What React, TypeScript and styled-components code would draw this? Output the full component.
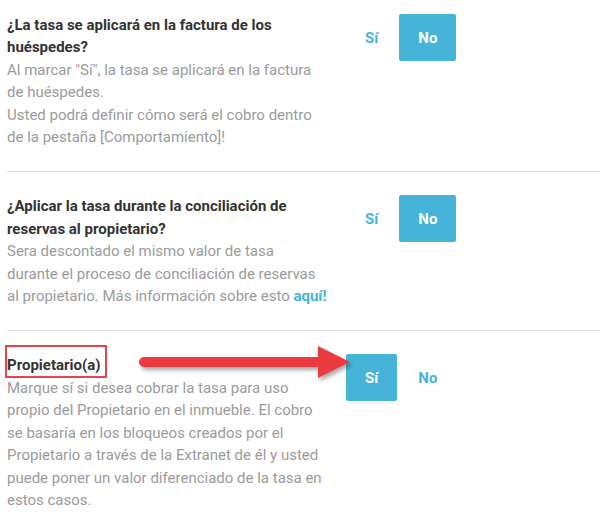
import styled, { createGlobalStyle } from 'styled-components';

const GlobalStyle = createGlobalStyle`
  body {
    margin: 0;
    background: #fff;
    font-family: Roboto, "Liberation Sans", sans-serif;
  }
`;

const BLUE = '#46b4d8';

const Page = styled.div`
  padding: 14px 0 0 7px;
`;

const Row = styled.section`
  position: relative;
  display: grid;
  grid-template-columns: 320px auto;
  column-gap: 19px;
  align-items: start;
  padding: 23px 0;
  border-top: 1px solid #dedede;

  &:first-child {
    padding-top: 0;
    border-top: none;
  }
`;

const Info = styled.div`
  font-size: 15px;
  line-height: 22.4px;
`;

const Title = styled.h3`
  margin: 0;
  font-size: 15px;
  font-weight: 700;
  line-height: 22.4px;
  color: #333;
`;

const Marked = styled.span`
  position: relative;
  display: inline-block;

  &::after {
    content: '';
    position: absolute;
    left: -2px;
    right: -7px;
    top: -9px;
    bottom: -1px;
    border: 2px solid #e5454a;
  }
`;

const Text = styled.p`
  margin: 0;
  color: #9b9b9b;
`;

const Link = styled.a`
  color: ${BLUE};
  font-weight: 700;
  text-decoration: none;
`;

const Options = styled.div`
  display: flex;
  gap: 2px;
`;

const Option = styled.button<{ $active?: boolean }>`
  height: 47px;
  padding: 0 19px;
  border: none;
  border-radius: 2px;
  font-family: inherit;
  font-size: 15px;
  font-weight: 700;
  cursor: pointer;
  color: ${(p) => (p.$active ? '#fff' : BLUE)};
  background: ${(p) => (p.$active ? BLUE : 'transparent')};
`;

const Arrow = styled.svg`
  position: absolute;
  left: 125px;
  top: 9px;
  overflow: visible;
`;

const Toggle = ({ value }: { value: 'si' | 'no' }) => (
  <Options>
    <Option $active={value === 'si'}>Sí</Option>
    <Option $active={value === 'no'}>No</Option>
  </Options>
);

export default function App() {
  return (
    <Page>
      <GlobalStyle />
      <Row>
        <Info>
          <Title>¿La tasa se aplicará en la factura de los huéspedes?</Title>
          <Text>Al marcar "Sí", la tasa se aplicará en la factura de huéspedes.</Text>
          <Text>Usted podrá definir cómo será el cobro dentro de la pestaña [Comportamiento]!</Text>
        </Info>
        <Toggle value="no" />
      </Row>
      <Row>
        <Info>
          <Title>¿Aplicar la tasa durante la conciliación de reservas al propietario?</Title>
          <Text>
            Sera descontado el mismo valor de tasa durante el proceso de conciliación de reservas al
            propietario. Más información sobre esto <Link href="#">aquí!</Link>
          </Text>
        </Info>
        <Toggle value="no" />
      </Row>
      <Row>
        <Info>
          <Title>
            <Marked>Propietario(a)</Marked>
          </Title>
          <Text>
            Marque sí si desea cobrar la tasa para uso propio del Propietario en el inmueble. El cobro se
            basaría en los bloqueos creados por el Propietario a través de la Extranet de él y usted puede
            poner un valor diferenciado de la tasa en estos casos.
          </Text>
        </Info>
        <Toggle value="si" />
        <Arrow width="225" height="45" viewBox="0 0 225 45">
          <defs>
            <filter id="shadow" x="-10%" y="-50%" width="130%" height="220%">
              <feDropShadow dx="2" dy="3" stdDeviation="2" floodColor="#000" floodOpacity="0.35" />
            </filter>
          </defs>
          <g filter="url(#shadow)" fill="#ec3b3f">
            <rect x="7" y="17" width="184" height="10" rx="5" />
            <path d="M186 6 L218 22 L186 38 Z" />
          </g>
        </Arrow>
      </Row>
    </Page>
  );
}
